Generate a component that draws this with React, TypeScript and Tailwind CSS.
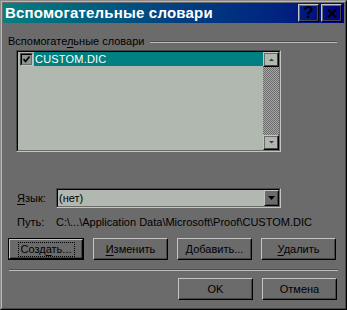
import React from "react";

const font = "font-['Liberation_Sans',Arial,sans-serif]";

function Btn({ children, def = false, w = "w-[75px]" }: { children: React.ReactNode; def?: boolean; w?: string }) {
  const inner = (
    <div className="h-full border border-t-[#c4c4c4] border-l-[#c4c4c4] border-r-black border-b-black">
      <div className="h-full border border-t-[#6b6b6b] border-l-[#6b6b6b] border-r-[#474747] border-b-[#474747] flex items-center justify-center">
        {def ? (
          <span className="border border-dotted border-black px-[2px] leading-[13px]">{children}</span>
        ) : (
          <span className="leading-[13px]">{children}</span>
        )}
      </div>
    </div>
  );
  return (
    <div className={`${w} h-[22px] ${def ? "border border-black" : ""}`}>{inner}</div>
  );
}

function U({ children }: { children: React.ReactNode }) {
  return <span className="underline underline-offset-[2px] decoration-1">{children}</span>;
}

function ScrollBtn({ up }: { up: boolean }) {
  return (
    <div className="w-[16px] h-[15px] border border-t-[#c4c4c4] border-l-[#c4c4c4] border-r-black border-b-black">
      <div className="w-full h-full border border-t-[#6b6b6b] border-l-[#6b6b6b] border-r-[#474747] border-b-[#474747] flex items-center justify-center">
        <svg width="7" height="5" viewBox="0 0 7 5">
          {up ? (
            <>
              <path d="M1 4 L6 4 L3.5 1.5 Z" fill="#3c3c3c" />
              <path d="M2 5 L7 5" stroke="#a8a8a8" strokeWidth="1" />
            </>
          ) : (
            <>
              <path d="M1 1 L6 1 L3.5 3.5 Z" fill="#3c3c3c" />
              <path d="M4 4.5 L7 4.5" stroke="#a8a8a8" strokeWidth="1" />
            </>
          )}
        </svg>
      </div>
    </div>
  );
}

export default function App() {
  return (
    <div className={`w-[347px] h-[310px] bg-[#6b6b6b] text-black text-[11px] ${font}`}>
      <div className="w-full h-full border border-t-[#8c8c8c] border-l-[#8c8c8c] border-r-black border-b-black">
        <div className="w-full h-full border border-t-[#b8b8b8] border-l-[#b8b8b8] border-r-[#474747] border-b-[#474747] p-px flex flex-col">
          {/* Title bar */}
          <div className="h-[20px] flex items-center bg-gradient-to-r from-[#0a7f7f] via-[#04407f] to-[#000080]">
            <div className="pl-[2px] text-white font-bold text-[15px] leading-[20px] tracking-[0.2px] flex-1">
              Вспомогательные словари
            </div>
            <div className="flex gap-[2px] pr-[2px]">
              <div className="w-[21px] h-[18px] border border-t-[#c4c4c4] border-l-[#c4c4c4] border-r-black border-b-black">
                <div className="w-full h-full border border-t-[#6b6b6b] border-l-[#6b6b6b] border-r-[#474747] border-b-[#474747] flex items-center justify-center font-bold text-[17px] leading-[16px]">
                  ?
                </div>
              </div>
              <div className="w-[21px] h-[18px] border border-t-[#c4c4c4] border-l-[#c4c4c4] border-r-black border-b-black">
                <div className="w-full h-full border border-t-[#6b6b6b] border-l-[#6b6b6b] border-r-[#474747] border-b-[#474747] flex items-center justify-center">
                  <svg width="10" height="9" viewBox="0 0 10 9">
                    <path d="M1 0.5 L9 8.5 M9 0.5 L1 8.5" stroke="black" strokeWidth="2" />
                  </svg>
                </div>
              </div>
            </div>
          </div>

          {/* Group header */}
          <div className="mt-[12px] flex items-center pl-[5px] pr-[7px] h-[13px]">
            <span className="leading-[13px]">
              Вспомогате<U>л</U>ьные словари
            </span>
            <div className="flex-1 ml-[6px] flex flex-col">
              <div className="h-px bg-[#4e4e4e]" />
              <div className="h-px bg-[#bcbcbc]" />
            </div>
          </div>

          {/* List box */}
          <div className="ml-[13px] mt-[2px] w-[265px] h-[102px] border border-t-[#474747] border-l-[#474747] border-r-[#c4c4c4] border-b-[#c4c4c4]">
            <div className="w-full h-full border border-t-black border-l-black border-r-[#6b6b6b] border-b-[#6b6b6b] bg-[#b0b8b0] flex">
              <div className="flex-1 pt-0">
                <div className="flex items-center h-[14px]">
                  <div className="ml-[2px] w-[13px] h-[13px] border border-t-[#474747] border-l-[#474747] border-r-[#c4c4c4] border-b-[#c4c4c4]">
                    <div className="w-full h-full border border-t-black border-l-black border-r-[#6b6b6b] border-b-[#6b6b6b] bg-[#8c9490] flex items-center justify-center">
                      <svg width="7" height="7" viewBox="0 0 7 7">
                        <path d="M0.5 3 L2.5 5.5 L6.5 0.5" stroke="black" strokeWidth="1.6" fill="none" />
                      </svg>
                    </div>
                  </div>
                  <div className="ml-[1px] flex-1 h-[14px] bg-[#008080] text-white leading-[14px] pl-[1px] tracking-[0.2px]">
                    CUSTOM.DIC
                  </div>
                </div>
              </div>
              <div className="w-[16px] flex flex-col">
                <ScrollBtn up />
                <div className="flex-1 bg-[repeating-conic-gradient(#a8a8a8_0_25%,#6b6b6b_0_50%)] bg-[length:2px_2px]" />
                <ScrollBtn up={false} />
              </div>
            </div>
          </div>

          {/* Language */}
          <div className="mt-[36px] flex items-center h-[20px]">
            <span className="ml-[14px] w-[39px] leading-[13px]">
              <U>Я</U>зык:
            </span>
            <div className="w-[225px] h-[20px] border border-t-[#474747] border-l-[#474747] border-r-[#c4c4c4] border-b-[#c4c4c4]">
              <div className="w-full h-full border border-t-black border-l-black border-r-[#6b6b6b] border-b-[#6b6b6b] bg-[#b0b8b0] flex items-center">
                <span className="flex-1 pl-px leading-[13px]">(нет)</span>
                <div className="w-[15px] h-[16px] border border-t-[#c4c4c4] border-l-[#c4c4c4] border-r-black border-b-black">
                  <div className="w-full h-full border border-t-[#6b6b6b] border-l-[#6b6b6b] border-r-[#474747] border-b-[#474747] bg-[#6b6b6b] flex items-center justify-center">
                    <svg width="7" height="4" viewBox="0 0 7 4">
                      <path d="M0 0 L7 0 L3.5 4 Z" fill="black" />
                    </svg>
                  </div>
                </div>
              </div>
            </div>
          </div>

          {/* Path */}
          <div className="mt-[8px] flex items-center h-[13px]">
            <span className="ml-[14px] w-[39px] leading-[13px]">Путь:</span>
            <span className="leading-[13px]">C:\...\Application Data\Microsoft\Proof\CUSTOM.DIC</span>
          </div>

          {/* Buttons */}
          <div className="mt-[9px] flex pl-[5px] gap-[9px]">
            <Btn def w="w-[76px]">
              Созд<U>а</U>ть...
            </Btn>
            <Btn>
              <U>И</U>зменить
            </Btn>
            <Btn>
              <U>Д</U>обавить...
            </Btn>
            <Btn>
              <U>У</U>далить
            </Btn>
          </div>

          {/* Separator */}
          <div className="mt-[9px] mx-[6px] mr-[6px] flex flex-col">
            <div className="h-px bg-[#4e4e4e]" />
            <div className="h-px bg-[#bcbcbc]" />
          </div>

          {/* OK / Cancel */}
          <div className="mt-[7px] flex justify-end pr-[7px] gap-[9px]">
            <Btn>OK</Btn>
            <Btn>Отмена</Btn>
          </div>
        </div>
      </div>
    </div>
  );
}
